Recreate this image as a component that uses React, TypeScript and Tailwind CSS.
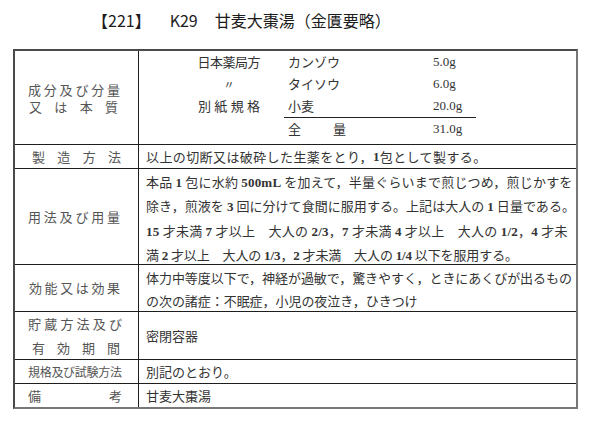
import React from 'react';

const jp = "font-['Noto_Sans_CJK_JP','Noto_Sans',sans-serif]";

// bold serif digits, like the Century figures in the scan
function N({ children }: { children: React.ReactNode }) {
  return <span className="font-['Liberation_Serif',serif] font-bold">{children}</span>;
}

function Label({ text, className = '' }: { text: string; className?: string }) {
  return (
    <div className={`flex justify-between ${className}`}>
      {text.split('').map((c, i) => (
        <span key={i}>{c}</span>
      ))}
    </div>
  );
}

function Row({
  label,
  children,
  h,
  last,
}: {
  label: React.ReactNode;
  children: React.ReactNode;
  h: string;
  last?: boolean;
}) {
  return (
    <div className={`flex ${h} ${last ? '' : 'border-b border-[#1e1e1e]'}`}>
      <div className="w-[124px] shrink-0 border-r border-[#1e1e1e] pl-[13px] pr-[18px] flex flex-col justify-center text-[13px] text-[#555]">
        {label}
      </div>
      <div className="flex-1 pl-[7px] text-[13px] text-[#333]">{children}</div>
    </div>
  );
}

const ingredients = [
  { src: '日本薬局方', name: 'カンゾウ', amt: '5.0g' },
  { src: '〃', name: 'タイソウ', amt: '6.0g' },
  { src: '別紙規格', name: '小麦', amt: '20.0g', line: true },
];

export default function App() {
  return (
    <div className={`w-[600px] h-[431px] bg-white ${jp}`}>
      <div className="h-[49px] pl-[92px] pt-[6px] text-[16px] leading-[28px] text-[#1c1c1c] whitespace-nowrap">
        <span>【221】</span>
        <span className="ml-[19px]">K29</span>
        <span className="ml-[17px]">甘麦大棗湯（金匱要略）</span>
      </div>

      <div className="ml-[13px] w-[565px] border-2 border-[#4a4a4a] border-r-[#777] border-b-[#777]">
        <Row
          h="h-[94px]"
          label={
            <div className="leading-[17px]">
              <Label text="成分及び分量" />
              <Label text="又は本質" className="pr-[2px] pl-[1px]" />
            </div>
          }
        >
          <div className="-ml-[7px] leading-[22px] text-[#333]">
            {ingredients.map((r) => (
              <div key={r.name} className="flex">
                <div className="w-[121px] flex justify-end">
                  {r.src === '別紙規格' ? (
                    <Label text="別紙規格" className="w-[62px]" />
                  ) : r.src === '〃' ? (
                    <div className="w-[62px] text-center text-[11px]">〃</div>
                  ) : (
                    <span className="tracking-[-0.5px]">{r.src}</span>
                  )}
                </div>
                <div className={`ml-[24px] w-[192px] flex ${r.line ? 'border-b border-[#222]' : ''}`}>
                  <div className="w-[149px] pl-[4px]">{r.name}</div>
                  <span className="font-['Liberation_Serif',serif]">{r.amt}</span>
                </div>
              </div>
            ))}
            <div className="flex">
              <div className="w-[121px]" />
              <div className="ml-[24px] w-[192px] flex">
                <div className="w-[149px] pl-[4px]">
                  <Label text="全量" className="w-[58px]" />
                </div>
                <span className="font-['Liberation_Serif',serif]">31.0g</span>
              </div>
            </div>
          </div>
        </Row>

        <Row h="h-[24px]" label={<Label text="製造方法" className="pl-[4px] -mr-[1px]" />}>
          <div className="h-full flex items-center tracking-[0.4px]">
            以上の切断又は破砕した生薬をとり，<N>1</N>包として製する。
          </div>
        </Row>

        <Row h="h-[96px]" label={<Label text="用法及び用量" />}>
          <div className="pt-[1px] leading-[23.3px] whitespace-nowrap">
            <div className="tracking-[0.2px]">
              本品 <N>1</N> 包に水約 <N>500mL</N> を加えて，半量ぐらいまで煎じつめ，煎じかすを
            </div>
            <div className="tracking-[0.05px]">
              除き，煎液を <N>3</N> 回に分けて食間に服用する。上記は大人の <N>1</N> 日量である。
            </div>
            <div className="tracking-[0.25px]">
              <N>15</N> 才未満 <N>7</N> 才以上　大人の <N>2/3</N>，<N>7</N> 才未満 <N>4</N> 才以上　大人の <N>1/2</N>，<N>4</N> 才未
            </div>
            <div className="tracking-[-0.1px]">
              満 <N>2</N> 才以上　大人の <N>1/3</N>，<N>2</N> 才未満　大人の <N>1/4</N> 以下を服用する。
            </div>
          </div>
        </Row>

        <Row h="h-[47px]" label={<Label text="効能又は効果" className="pl-[1px]" />}>
          <div className="pt-[1px] leading-[23px] whitespace-nowrap tracking-[-0.05px]">
            <div>体力中等度以下で，神経が過敏で，驚きやすく，ときにあくびが出るもの</div>
            <div>の次の諸症：不眠症，小児の夜泣き，ひきつけ</div>
          </div>
        </Row>

        <Row
          h="h-[48px]"
          label={
            <div className="leading-[24px]">
              <Label text="貯蔵方法及び" className="-mr-[2px]" />
              <Label text="有効期間" className="pl-[4px]" />
            </div>
          }
        >
          <div className="h-full flex items-center">密閉容器</div>
        </Row>

        <Row
          h="h-[24px]"
          label={
            <div className="text-[12px] tracking-[-0.3px] whitespace-nowrap -mr-[6px]">規格及び試験方法</div>
          }
        >
          <div className="h-full flex items-center">別記のとおり。</div>
        </Row>

        <Row h="h-[23px]" last label={<Label text="備考" className="-mr-[2px]" />}>
          <div className="h-full flex items-center">甘麦大棗湯</div>
        </Row>
      </div>
    </div>
  );
}
